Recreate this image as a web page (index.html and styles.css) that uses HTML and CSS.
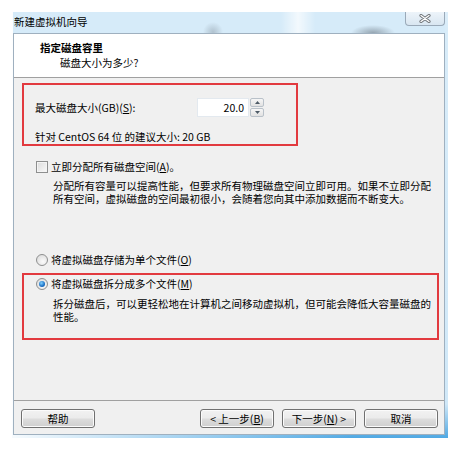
FILE: index.html
```html
<!DOCTYPE html>
<html lang="zh-CN">
<head>
<meta charset="utf-8">
<title>新建虚拟机向导</title>
<link rel="stylesheet" href="styles.css">
</head>
<body>
<div class="window">
  <div class="titlebar">
    <span class="title">新建虚拟机向导</span>
    <span class="close">
      <svg width="12" height="9" viewBox="0 0 12 9">
        <path d="M2 1.5 L10 7.5 M10 1.5 L2 7.5" stroke="#6f7479" stroke-width="3.2" stroke-linecap="round" fill="none"/>
        <path d="M2 1.5 L10 7.5 M10 1.5 L2 7.5" stroke="#ffffff" stroke-width="1.3" stroke-linecap="round" fill="none"/>
      </svg>
    </span>
  </div>
  <div class="client">
    <div class="header">
      <div class="h-title">指定磁盘容里</div>
      <div class="h-sub">磁盘大小为多少?</div>
    </div>
    <div class="body">
      <div class="hl box1">
        <div class="size-row">
          <span class="size-label">最大磁盘大小(GB)(<u>S</u>):</span>
          <span class="spin-input">20.0</span>
          <span class="spin-btns">
            <span class="spin-btn"><svg width="5" height="3" viewBox="0 0 5 3"><path d="M0 3 L2.5 0 L5 3 Z" fill="#4d5a66"/></svg></span>
            <span class="spin-btn"><svg width="5" height="3" viewBox="0 0 5 3"><path d="M0 0 L2.5 3 L5 0 Z" fill="#4d5a66"/></svg></span>
          </span>
        </div>
        <div class="hint">针对 CentOS 64 位 的建议大小: 20 GB</div>
      </div>

      <div class="opt check-opt"><span class="checkbox"></span>立即分配所有磁盘空间(<u>A</u>)。</div>
      <p class="desc desc-alloc">分配所有容量可以提高性能，但要求所有物理磁盘空间立即可用。如果不立即分配<br>所有空间，虚拟磁盘的空间最初很小，会随着您向其中添加数据而不断变大。</p>

      <div class="opt radio-single"><span class="radio"></span>将虚拟磁盘存储为单个文件(<u>O</u>)</div>

      <div class="hl box2">
        <div class="opt"><span class="radio checked"></span>将虚拟磁盘拆分成多个文件(<u>M</u>)</div>
        <p class="desc desc-split">拆分磁盘后，可以更轻松地在计算机之间移动虚拟机，但可能会降低大容量磁盘的<br>性能。</p>
      </div>
    </div>
    <div class="footer">
      <span class="btn">帮助</span>
      <span class="spacer"></span>
      <span class="btn">&lt; 上一步(<u>B</u>)</span>
      <span class="btn">下一步(<u>N</u>) &gt;</span>
      <span class="btn">取消</span>
    </div>
  </div>
</div>
</body>
</html>
```

FILE: styles.css
```css
* { box-sizing: border-box; }

body {
  margin: 0;
  background: #ffffff;
  font-family: "Noto Sans CJK SC", "Noto Sans", sans-serif;
  font-size: 10.5px;
  color: #000;
}

.window {
  margin: 12px 0 0 12px;
  width: 436px;
  padding: 0 3px 3px 1px;
  display: flex;
  flex-direction: column;
  background:
    linear-gradient(to right, rgba(255,255,255,0.95) 0%, rgba(255,255,255,0) 78%),
    linear-gradient(to bottom, #dcedf9 0%, #d8ecf9 5%, #d0e8f8 92%, #4fa8e3 100%);
}

.titlebar {
  height: 21px;
  display: flex;
  justify-content: space-between;
  align-items: flex-start;
  background:
    radial-gradient(ellipse 22px 8px at 360px 21px, rgba(70,80,90,0.45), rgba(70,80,90,0) 100%),
    radial-gradient(ellipse 10px 10px at 200px 20px, rgba(90,100,110,0.3), rgba(90,100,110,0) 100%),
    linear-gradient(to right, rgba(255,255,255,0) 62%, rgba(255,255,255,0.7) 66%, rgba(255,255,255,0) 70%),
    #d6ebf9;
}

.title {
  padding-left: 1px;
  line-height: 20px;
}

.close {
  width: 40px;
  height: 14px;
  display: flex;
  align-items: center;
  justify-content: center;
  border: 1px solid #9aa9b8;
  border-top: none;
  border-radius: 0 0 4px 4px;
  background: linear-gradient(to bottom, #edf4fa, #d9e6f1);
}

.client {
  height: 402px;
  border: 1px solid #9fb0bf;
  display: flex;
  flex-direction: column;
}

.header {
  height: 44px;
  background: #ffffff;
  border-bottom: 1px solid #a0a0a0;
  padding: 7px 0 0 26px;
}

.h-title {
  font-weight: bold;
  line-height: 14px;
}

.h-sub {
  margin-top: 1px;
  padding-left: 20px;
  line-height: 14px;
}

.body {
  flex: 1;
  background: #f0f0f0;
  padding: 5px 5px 0 8px;
  display: flex;
  flex-direction: column;
  align-items: flex-start;
}

.hl {
  border: 2px solid #e23a3f;
}

.box1 {
  width: 276px;
  height: 63px;
  padding: 13px 0 0 11px;
}

.size-row {
  display: flex;
  align-items: center;
  height: 19px;
}

.size-label {
  width: 162px;
  line-height: 14px;
}

.spin-input {
  width: 52px;
  height: 19px;
  background: #ffffff;
  border: 1px solid #e3e9ef;
  text-align: right;
  padding-right: 4px;
  line-height: 17px;
}

.spin-btns {
  width: 14px;
  height: 19px;
  margin-left: 1px;
  display: flex;
  flex-direction: column;
  gap: 1px;
}

.spin-btn {
  flex: 1;
  display: flex;
  align-items: center;
  justify-content: center;
  border: 1px solid #b9c1c9;
  border-radius: 2px;
  background: linear-gradient(to bottom, #f6f6f6, #e2e2e2);
}

.hint {
  margin-top: 14px;
  line-height: 12px;
}

.opt {
  display: flex;
  align-items: center;
  line-height: 13px;
  height: 13px;
}

.check-opt {
  margin-top: 14px;
  padding-left: 14px;
}

.checkbox {
  width: 12px;
  height: 12px;
  margin-right: 3px;
  border: 1px solid #8e8f8f;
  background: linear-gradient(135deg, #dcdcdc, #f9f9f9);
  box-shadow: inset 0 0 0 1px #f4f4f4;
}

.radio {
  width: 12px;
  height: 12px;
  margin-right: 3px;
  border-radius: 50%;
  border: 1px solid #8e8f8f;
  background: radial-gradient(circle at 60% 65%, #fbfbfb 0%, #dedede 80%);
  display: flex;
  align-items: center;
  justify-content: center;
}

.radio.checked::after {
  content: "";
  width: 6px;
  height: 6px;
  border-radius: 50%;
  background: radial-gradient(circle at 40% 35%, #7fd0ff 0%, #1a6fc4 60%, #0d4f9a 100%);
}

.desc {
  margin: 0;
  white-space: nowrap;
  line-height: 13px;
}

.desc-alloc {
  margin-top: 6px;
  padding-left: 31px;
}

.radio-single {
  margin-top: 48px;
  padding-left: 14px;
}

.box2 {
  width: 417px;
  height: 67px;
  margin-top: 7px;
  padding: 2px 0 0 12px;
}

.desc-split {
  margin-top: 7px;
  padding-left: 17px;
}

.footer {
  height: 34px;
  border-top: 1px solid #a0a0a0;
  background: #f0f0f0;
  padding: 8px 6px 0 7px;
  display: flex;
  align-items: flex-start;
  gap: 8px;
}

.spacer { flex: 1; }

.btn {
  width: 74px;
  height: 19px;
  display: flex;
  align-items: center;
  justify-content: center;
  border: 1px solid #707070;
  border-radius: 3px;
  background: linear-gradient(to bottom, #f2f2f2 0%, #ebebeb 48%, #dddddd 52%, #cfcfcf 100%);
  box-shadow: inset 0 0 0 1px #fbfbfb;
  line-height: 13px;
}

u { text-decoration: underline; text-underline-offset: 1px; }
```
